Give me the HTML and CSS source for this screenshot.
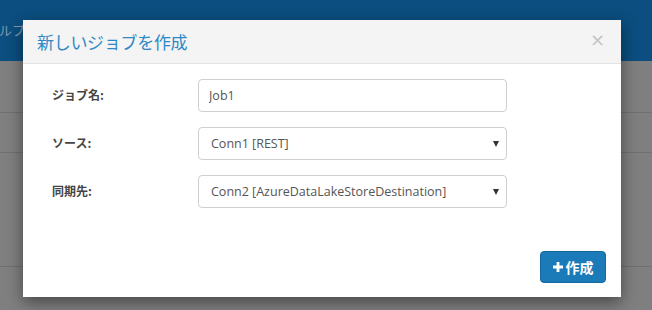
FILE: index.html
```html
<!DOCTYPE html>
<html lang="ja">
<head>
<meta charset="utf-8">
<link rel="stylesheet" href="styles.css">
</head>
<body>
<div class="page">
  <div class="topbar"><span class="nav-text">ルプ</span></div>
  <div class="row row-a"></div>
  <div class="row row-b"></div>
  <div class="row row-c"></div>
  <div class="row row-d"></div>
</div>

<div class="modal">
  <div class="modal-header">
    <h4 class="modal-title">新しいジョブを作成</h4>
    <span class="close">×</span>
  </div>
  <div class="modal-body">
    <label class="label">ジョブ名:</label>
    <div class="control"><input class="input" type="text" value="Job1"></div>
    <label class="label">ソース:</label>
    <div class="control select-wrap"><div class="select">Conn1 [REST]</div></div>
    <label class="label">同期先:</label>
    <div class="control select-wrap"><div class="select">Conn2 [AzureDataLakeStoreDestination]</div></div>
  </div>
  <div class="modal-footer">
    <button class="btn"><svg class="plus" width="10" height="10" viewBox="0 0 10 10"><path d="M3.6 0h2.8v3.6H10v2.8H6.4V10H3.6V6.4H0V3.6h3.6z" fill="#fff"/></svg><span>作成</span></button>
  </div>
</div>
</body>
</html>
```

FILE: styles.css
```css
* { box-sizing: border-box; }
html, body { margin: 0; padding: 0; }
body {
  width: 652px;
  height: 310px;
  overflow: hidden;
  background: #7f7f7f;
  font-family: "Open Sans", "Noto Sans CJK JP", sans-serif;
  color: #333;
}
.page { display: flex; flex-direction: column; }
.topbar {
  height: 61px;
  background: #0b4e7f;
  display: flex;
  align-items: center;
  padding-bottom: 2px;
}
.nav-text {
  font-family: "Noto Sans CJK JP", sans-serif;
  font-size: 13px;
  color: #7f9ab3;
  margin-left: -1px;
}
.row { border-bottom: 1px solid #707070; }
.row-a { height: 52px; }
.row-b { height: 40px; }
.row-c { height: 114px; }
.row-d { height: 40px; border-bottom: none; }

.modal {
  position: absolute;
  left: 23px;
  top: 20px;
  width: 598px;
  height: 277px;
  background: #fff;
  box-shadow: 0 5px 15px rgba(0,0,0,0.45);
  display: flex;
  flex-direction: column;
}
.modal-header {
  height: 44px;
  background: #f4f4f4;
  border-bottom: 1px solid #e3e3e3;
  display: flex;
  align-items: center;
  justify-content: space-between;
  padding: 0 16px 0 14px;
}
.modal-title {
  margin: 0;
  font-family: "Noto Sans CJK JP", sans-serif;
  font-weight: 400;
  font-size: 17px;
  color: #2f88c4;
  letter-spacing: -0.3px;
}
.close {
  font-family: "DejaVu Sans", sans-serif;
  font-size: 18px;
  color: #c4c4c4;
  line-height: 1;
  margin-top: -4px;
}
.modal-body {
  display: grid;
  grid-template-columns: 146px 309px;
  grid-auto-rows: 33px;
  row-gap: 15px;
  padding: 15px 0 0 29px;
}
.label {
  font-family: "Noto Sans CJK JP", sans-serif;
  font-size: 12px;
  font-weight: 700;
  color: #444;
  display: flex;
  align-items: center;
  padding-bottom: 2px;
}
.control { position: relative; }
.input, .select {
  width: 100%;
  height: 33px;
  border: 1px solid #cfcfcf;
  border-radius: 4px;
  font-family: "Open Sans", "Noto Sans CJK JP", sans-serif;
  font-size: 12.5px;
  color: #555;
  background: #fff;
}
.input {
  padding: 0 10px;
  outline: none;
}
.select {
  display: flex;
  align-items: center;
  padding: 0 12px;
}
.select-wrap::after {
  content: "";
  position: absolute;
  right: 8px;
  top: 14px;
  border-left: 3.5px solid transparent;
  border-right: 3.5px solid transparent;
  border-top: 6px solid #333;
}
.modal-footer {
  margin-top: auto;
  display: flex;
  justify-content: flex-end;
  padding: 0 15px 14px 0;
}
.btn {
  width: 66px;
  height: 32px;
  border: 1px solid #14699f;
  border-radius: 4px;
  background: #1b7bb8;
  color: #fff;
  font-family: "Noto Sans CJK JP", sans-serif;
  font-size: 14px;
  font-weight: 700;
  display: flex;
  align-items: center;
  justify-content: center;
  gap: 3px;
  padding: 0 0 1px 0;
}
.plus { display: block; }
```
